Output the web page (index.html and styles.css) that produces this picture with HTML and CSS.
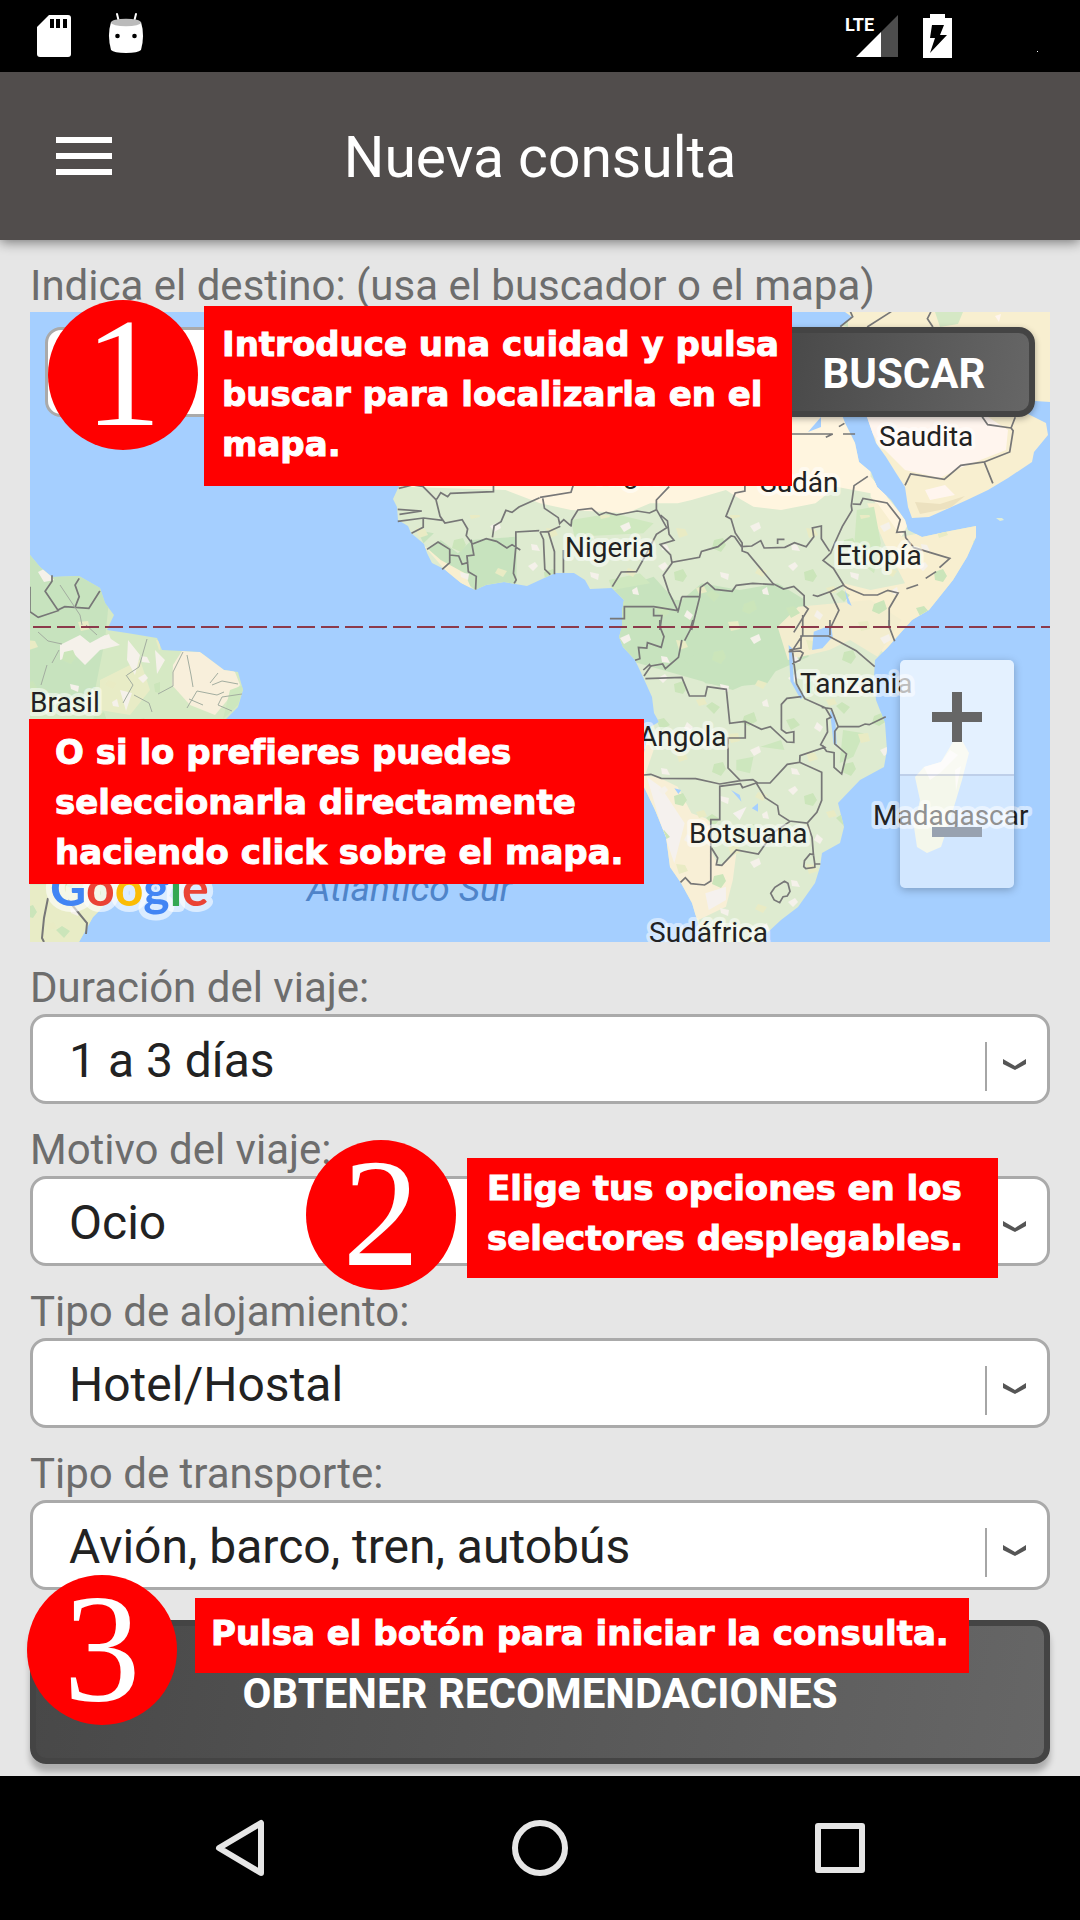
FILE: index.html
```html
<!DOCTYPE html>
<html lang="es">
<head>
<meta charset="utf-8">
<meta name="viewport" content="width=device-width, initial-scale=1">
<title>Nueva consulta</title>
<link rel="stylesheet" href="styles.css">
</head>
<body>
<div class="app">
  <div class="status">
    <svg class="status-left" viewBox="0 0 160 72" aria-hidden="true">
      <path fill="#fff" d="M49 15h19q3 0 3 3v36q0 3-3 3H40q-3 0-3-3V27z"/>
      <path fill="#000" d="M50 19h4v9h-4zM56 19h4v9h-4zM63 19h4v9h-4z"/>
      <path stroke="#fff" stroke-width="2" fill="none" stroke-linecap="round" d="M117 14l2 8M136 14l-2 8"/>
      <path fill="#fff" d="M111 22h30q4 13 0 28q-3 3-15 3t-15-3q-4-15 0-28z"/>
      <ellipse cx="126" cy="22.500" rx="15" ry="3.800" fill="#bbb"/>
      <circle cx="117.500" cy="36" r="2.300"/><circle cx="134.500" cy="36" r="2.300"/>
    </svg>
    <svg class="status-right" viewBox="840 0 240 72" aria-hidden="true">
      <text class="lte" x="845" y="31">LTE</text>
      <path fill="#fff" d="M856 57l25-25v25z"/>
      <path fill="#4d4d4d" d="M881 32l17-17v42h-17z"/>
      <path fill="#fff" d="M930 14h15v4h7v40h-29V18h7z"/>
      <path d="M932 25h12l-4 10h7l-17 18 5-15h-5z"/>
      <path fill="#fff" d="M1037 51h1v1h-1z"/>
    </svg>
  </div>

  <header class="bar">
    <button class="menu" type="button" aria-label="Menú"><span></span><span></span><span></span></button>
    <h1>Nueva consulta</h1>
  </header>

  <form class="form">
    <div class="field">
      <label for="destino">Indica el destino: (usa el buscador o el mapa)</label>
      <div class="map">
        <svg class="map-art" viewBox="30 312 1020 630" preserveAspectRatio="xMidYMid slice" aria-hidden="true">
          <defs>
            <clipPath id="africa"><path d="M399 486L393 499 397 507 398 520 408 526 411 533 424 544 427 553 432 563 444 569 461 583 475 590 486 585 504 582 527 586 540 580 555 573 574 573 585 580 590 589 612 588 624 600 622 612 622 627 619 637 623 647 635 660 643 677 652 697 654 713 659 722 650 727 644 753 644 787 655 810 666 837 670 867 681 883 692 903 697 920 705 942 760 942 767 933 781 920 798 907 815 883 820 867 822 853 840 843 844 827 838 803 860 780 884 767 887 750 885 723 876 700 874 677 875 660 888 647 912 620 929 610 953 580 967 557 976 537 976 526 950 531 922 537 908 530 905 520 891 500 877 487 871 472 859 462 855 443 845 423 840 410 399 410z"/></clipPath>
            <clipPath id="arabia"><path d="M845 312L852 317 840 328 840 400 867 417 876 443 886 457 896 473 905 487 908 507 912 518 929 517 967 500 988 490 1008 478 1032 462 1034 452 1048 435 1046 423 1036 418 1020 410 1020 400 1050 402V312z"/></clipPath>
            <clipPath id="america"><path d="M30 555L40 567 52 577 79 576 100 588 105 603 114 615 107 630 127 633 157 638 162 650 182 651 200 652 224 670 238 672 243 690 238 707 226 719 200 800 100 910 93 917 79 942H30z"/></clipPath>
            <pattern id="specks" width="130" height="112" patternUnits="userSpaceOnUse">
              <path fill="#f5f1ea" d="M8 6l7-4 3 4-5 5zM70 12l9 2-1 6-7-3zM34 56l3-6 6 5-3 5zM100 78l9-4 2 6-7 4zM11 96l6 1 3 6-8-1zM112 30l5-3 2 8-6-1z"/>
              <path fill="#cbe5ba" d="M24 12l9-3 4 7-4 6-8-2zM94 44l10-4 3 9-8 5-7-3zM6 48l8-2 6 7-9 5zM64 92l9-2 3 7-5 7-9-4zM56 34l6-4 8 5-6 7z"/>
              <path fill="#e9ebc4" d="M46 28l8-2 3 6-8 2zM108 8l9 3-4 6-8-4zM26 80l9 1 3 6-9 3zM78 62l10-1 2 8-9 2z"/>
            </pattern>
            <linearGradient id="letters" gradientUnits="userSpaceOnUse" x1="50" y1="0" x2="250" y2="0">
              <stop offset=".18" stop-color="#4285f4"/><stop offset=".18" stop-color="#ea4335"/>
              <stop offset=".325" stop-color="#ea4335"/><stop offset=".325" stop-color="#fbbc05"/>
              <stop offset=".47" stop-color="#fbbc05"/><stop offset=".47" stop-color="#4285f4"/>
              <stop offset=".605" stop-color="#4285f4"/><stop offset=".605" stop-color="#34a853"/>
              <stop offset=".665" stop-color="#34a853"/><stop offset=".665" stop-color="#ea4335"/>
            </linearGradient>
          </defs>
          <rect x="30" y="312" width="1020" height="630" fill="#a5cfff"/>

          <g clip-path="url(#africa)">
            <rect x="390" y="400" width="600" height="545" fill="#deebd0"/>
            <g transform="translate(540 290) scale(.34436 .33333)">
              <path fill="#fff5df" d="M-500 300H960V560L1010 620 960 610 860 590 800 640 700 660 620 650 570 620 540 600 440 630 400 640 320 640 250 670 90 660 0 640-100 600-400 590z"/>
              <path fill="#fff5df" d="M960 560L1070 700 1050 740 960 620z"/>
              <path fill="#f8efd0" d="M1050 740L1300 690 1250 830 1020 1120 930 1000 890 930 880 880 960 900 1060 880 1000 760 950 640 980 640z"/>
              <path fill="#c7e3be" d="M215 900L330 860 400 940 470 880 580 900 690 880 770 930 780 1100 560 1200 220 1100z"/>
              <path fill="#cfe8bf" d="M90 690L210 670 330 700 300 730 100 740zM920 660L970 650 990 760 970 850 910 800zM200 870l90-20 30 30-110 20z"/>
            </g>
            <g transform="translate(0 290) scale(.34436 .33333)">
              <path fill="#c7e3be" d="M1370 750L1500 740 1500 880 1380 900 1240 780 1280 750 1330 790zM1210 720l50 10-30 30z"/>
              <path fill="#f8efd0" d="M1190 730l60 60 60 70 60 40-20-50-70-40z"/>
            </g>
            <g transform="translate(540 620) scale(.34436 .33333)">
              <path fill="#c7e3be" d="M220-60H740L735 80 700 130 660 190 560 200 480 190 420 120 460 100 400 70 340 130 240 80z"/>
              <path fill="#f8efd6" d="M300 330L330 390 305 465 350 475 400 500 440 580 495 600 500 700 520 740 570 700 560 780 540 860 460 900 370 760 300 500z"/>
              <path fill="#f5f1ee" d="M310 470l40 30 70 110-30 120-40-120zM480 820l60-20 0 40-50 30zM560 580l40-20-20 40z"/>
              <path fill="#f3edcf" d="M690 20L750-40 960-60 1050 0 980 110 900 60 840 90 720 120z"/>
              <path fill="#cde7be" d="M570 420l50-10-10 50-40-10zM880 330l60 10-30 70-40 20zM640 380l60-20 10 30z"/>
            </g>
            <rect x="390" y="515" width="600" height="430" fill="url(#specks)"/>
            <g fill="#a5cfff" transform="translate(540 620) scale(.34436 .33333)">
              <path d="M795 35L845 15 850 50 820 85 790 90zM722 75l10 10 5 100 28 45-8 8-30-55zM842 270l15 20 5 90-10-10zM555 510l25 15 5 20zM390 505l20 5-8 12zM615 565l18-15v25z"/>
              <path d="M885-92l20 50-12-8z"/>
            </g>
            <path fill="#a5cfff" d="M808 432l13-15v10z"/>
          </g>

          <g clip-path="url(#arabia)">
            <rect x="830" y="312" width="220" height="210" fill="#f8efd0"/>
            <path fill="#fff5ee" d="M860 415H985L1008 430 1006 450 960 468 940 478 905 470 880 445zM925 490l20-5 10 10-25 5z"/>
            <path fill="#ece1bf" d="M915 502l25 2 25-8-15 12-30 6z"/>
            <path fill="#d5e8c5" d="M935 312h28l-5 12-18 3zM840 325l8-8v10z"/>
            <path fill="#fff5ee" d="M995 316l6-2-2 8z"/>
          </g>

          <g clip-path="url(#america)">
            <rect x="30" y="550" width="220" height="400" fill="#d6e9c4"/>
            <path fill="#c7e3be" d="M30 550L110 590 105 640 95 690 60 715 30 700z"/>
            <path fill="#f8efdb" d="M173 665L182 651 200 652 235 672 240 685 215 715 190 705 172 685z"/>
            <path fill="#e8ecc6" d="M100 680l40-20 10 30-20 25-30-5zM30 885h70v40l-20 20H30z"/>
            <path fill="#cde7be" d="M230 690l14-5-6 20-15 14z"/>
            <path fill="#f5f1ea" d="M38 572l8-4 8 12-10 2zM60 645l20-10 10 8 15-8 15 10-20 5-15 15-10-10-15 5zM128 640l12 15-5 20-8-15zM155 650l10 10-8 14zM120 690l12 3-6 18z"/>
            <rect x="30" y="620" width="130" height="330" fill="url(#specks)"/>
          </g>

          <path fill="#e9efd6" d="M958 733L969 753 962 780 950 820 941 847 927 853 917 847 914 827 920 800 915 777 924 767 941 762 950 747z"/>
          <path fill="#f8f5f0" d="M924 767l17-5 9-12 8 5-18 18-10 7zM955 770l6-4-5 25z"/>
          <path fill="#e0edd8" d="M996 518l6 0 2 2-4 1z"/>

          <g class="border">
            <g transform="translate(0 290) scale(.34436 .33333)">
              <path d="M1158 595l40-10 30 4 38 40 12 50 14 20 50-10 16 28-4 20 18 25 40-16 30 8 30 20 15-10 24 16M1268 628l12-20 20 12 8-10 125-5v-30M1430 742l5-35 20-12 14-34 18 6 20-16 60-28M1155 658l70 5-65 10M1155 694l75-10 56 7M1195 730l34-18v-26M1240 778l32-22 34 22v40l-22 20M1306 795l26 3 10 25 16-5-2-20 20-3-8-46M1358 820l2 25 23 14-2 40M1498 770v-44l68-4M1498 770l-7 80 8 20-6 10"/>
              <path d="M87 890v75l24 17 58-20-38-58 20-30v-18M230 865l-12 20 12 35-12 32M168 960l20-10 70 5 32-52"/>
            </g>
            <g transform="translate(540 290) scale(.34436 .33333)">
              <path d="M0 622l90-15 6-20M8 625l5 30 40 28 4 18 12-12 20 18M0 726l24-1 35-16M375 590l-37 40v28l30 55-30 20-30 60-28 52-44 1-26 44M90 710l2-20 18-30 40-5 22 20 20-8 30 8 60-12 36 6 20-10M350 675l20 18 5 40 14 18-40 12 30 32 4 22 80-15 6-18 48-14 38-32 10 2 20 30 30-2 26-16 10 22 60-2 28-14 34 12 22-30-4-26 26-6v38l24 38M595 587v16l-28 6-27 70 15 8 12 42 20 30v24l16 6 74 92 30 16 30-8 30 28v30l12 10-24 40-18 30M384 818l-26 38 16 50 26 56-70-12h-85v36h-42M330 955v22h24l-6 43M412 920l-12 48M412 920h52l2-28 20-14 22 20 50 6 12-18 48-6 62 4M464 920l-24 100M792 915l14 4 36-14 40-20-30-50-30-24 22-22 12-30 22-50 28-48-2-14 8-60 40-28M908 642l22 1 8-18 70 14 38 50-10 38 24-2 2 18 24 30 104 32-30 28M1120 865l30-20M1064 896l34-12M880 885l14 10 46 20h40l30-14 30 8-26 46v60M842 905l26 56-26 56M0 726l10 22 4 90 16 16M24 725l18 60v68M68 780v68M700 432h150l-20 10M880 432h35M868 410l16-10M690 762v-14h20M950 111l70-46M900 62l8 18-36 30M1135 66l-10 20 16 25"/>
              <path d="M1060 586l16-34 98 16 48-42 68-10 25 64M1290 516l74-30 10-64-6-8 12-32M1368 414l-68-10-16-24"/>
            </g>
            <g transform="translate(540 620) scale(.34436 .33333)">
              <path d="M348 0v20l12 30-8 32-40-14-2 16-24-2 4 34-14 5M444 0l-8 30-16 32M412 60l-10 52-38 34-8-14-34 6-20 30M300 150l18-16 4 8M306 176l106-4 22 56h46l6-28 55 8 10 102 44-6 48 24 26-8 48 46 20 1v-32l-22 4-14-10v-76l16-18 42-5M596 304v50h-50v90l36 38-60 10-70-16-100-1-30-12-20 2M582 482l36-3 14 10h36l50-56 36-6 1-20 72-25-12-8 20-38-2-38 12-6-16-28-60-28-24-45-12-100 30-46v-60M724 90l34-6v-36h80l80 44 54 48M722 95l34-2 8 6-10 22-22 10M842 0v46M1014 0v20l16 44M818 262l28 4 20 54h60l18-8 12 2 48-24M866 320l-10 14v38l34 30-14 60-22-20v-44l-22-4-12-18M754 427l64 30v84l-14 36-28 32-52-6-30-20-4-26-36-24-26-44-40 14-6-12-60 8v100h-26v184l-18 12-40-4-16-18-14 14M498 684l18 30-4 20 16 2 42-46 64 12 44-64 48-34M776 608l14 44 4 52-10-2-16 20-2 18 6 6 26-4v-10h16M794 704l4 28M670 820l12-18 28-18 10 6 6 24-8 14-12 2-10 18-16-8z"/>
            </g>
            <path class="faint" d="M60 585l20 30 2 10M86 625l11 10M38 632l10 9 14 3M59 650l-7 13M47 665l-6 20M147 639l-8 28-12 8M183 652l-10 20v14l-15 8M187 655l4 20 2 12M210 683l8-10M212 685l10-4 16 3M187 708l10-17 20 4 7-3M203 705l-14-6M242 694l-20 3-4 8 14 6M126 675l7 10-10 18M134 695l15 8 3 9"/>
            <path d="M48 898l-4 20-2 20 2 4M68 900l19 23-1 11"/>
          </g>

          <path class="equator" d="M33 627H1050"/>

          <g class="place">
            <text x="879" y="446">Saudita</text>
            <text x="760" y="492">Sudán</text>
            <text x="596" y="483">Níger</text>
            <text x="565" y="557">Nigeria</text>
            <text x="836" y="565">Etiopía</text>
            <text x="30" y="712">Brasil</text>
            <text x="800" y="693">Tanzania</text>
            <text x="639" y="746">Angola</text>
            <text x="689" y="843">Botsuana</text>
            <text x="873" y="825">Madagascar</text>
            <text x="649" y="942">Sudáfrica</text>
          </g>
          <text class="ocean" x="307" y="901">Atlántico Sur</text>
          <text class="google" x="50" y="906">Google</text>
        </svg>

        <div class="search">
          <input id="destino" type="text">
          <button class="dark" type="button">BUSCAR</button>
        </div>
        <div class="zoom">
          <button type="button" aria-label="Acercar"><svg viewBox="0 0 50 50"><path d="M20 0h10v20h20v10H30v20H20V30H0V20h20z"/></svg></button>
          <button type="button" aria-label="Alejar" disabled><svg viewBox="0 0 50 50"><path d="M0 20h50v10H0z"/></svg></button>
        </div>
      </div>
      <span class="step step-1">1</span>
      <p class="tip tip-search">Introduce una cuidad y pulsa<br>buscar para localizarla en el<br>mapa.</p>
      <p class="tip tip-map">O si lo prefieres puedes<br>seleccionarla directamente<br>haciendo click sobre el mapa.</p>
    </div>

    <div class="field">
      <label for="duracion">Duración del viaje:</label>
      <div class="pick">
        <select id="duracion"><option>1 a 3 días</option></select>
        <svg viewBox="0 0 65 90" aria-hidden="true"><path fill="#a6a6a6" d="M0 28h2v49H0z"/><path fill="#555" d="M18 45l12 7 11-7v5l-11 6-12-6z"/></svg>
      </div>
    </div>

    <div class="field">
      <label for="motivo">Motivo del viaje:</label>
      <div class="pick">
        <select id="motivo"><option>Ocio</option></select>
        <svg viewBox="0 0 65 90" aria-hidden="true"><path fill="#a6a6a6" d="M0 28h2v49H0z"/><path fill="#555" d="M18 45l12 7 11-7v5l-11 6-12-6z"/></svg>
      </div>
      <span class="step step-2">2</span>
      <p class="tip tip-select">Elige tus opciones en los<br>selectores desplegables.</p>
    </div>

    <div class="field">
      <label for="alojamiento">Tipo de alojamiento:</label>
      <div class="pick">
        <select id="alojamiento"><option>Hotel/Hostal</option></select>
        <svg viewBox="0 0 65 90" aria-hidden="true"><path fill="#a6a6a6" d="M0 28h2v49H0z"/><path fill="#555" d="M18 45l12 7 11-7v5l-11 6-12-6z"/></svg>
      </div>
    </div>

    <div class="field">
      <label for="transporte">Tipo de transporte:</label>
      <div class="pick">
        <select id="transporte"><option>Avión, barco, tren, autobús</option></select>
        <svg viewBox="0 0 65 90" aria-hidden="true"><path fill="#a6a6a6" d="M0 28h2v49H0z"/><path fill="#555" d="M18 45l12 7 11-7v5l-11 6-12-6z"/></svg>
      </div>
    </div>

    <div class="submit">
      <button class="dark" type="button">OBTENER RECOMENDACIONES</button>
      <span class="step step-3">3</span>
      <p class="tip tip-submit">Pulsa el botón para iniciar la consulta.</p>
    </div>
  </form>

  <nav class="nav">
    <button type="button" aria-label="Atrás"><svg viewBox="0 0 60 60"><path d="M51 5v50L9 30z"/></svg></button>
    <button type="button" aria-label="Inicio"><svg viewBox="0 0 60 60"><circle cx="30" cy="30" r="25"/></svg></button>
    <button type="button" aria-label="Recientes"><svg viewBox="0 0 60 60"><path d="M8 8h44v44H8z"/></svg></button>
  </nav>
</div>
</body>
</html>
```
FILE: styles.css
```css
* { box-sizing: border-box; }

body {
  margin: 0;
  background: #e6e6e6;
  font-family: Roboto, "Liberation Sans", sans-serif;
}

button, input, select { font: inherit; margin: 0; }
h1, p { margin: 0; }

.app {
  display: flex;
  flex-direction: column;
  min-height: 100vh;
}

/* System status bar */
.status {
  display: flex;
  justify-content: space-between;
  height: 72px;
  background: #000;
}
.status-left { width: 160px; height: 72px; }
.status-right { width: 240px; height: 72px; }
.lte {
  font: bold 18px Roboto, sans-serif;
  fill: #fff;
}

/* Title bar */
.bar {
  display: grid;
  grid-template-columns: 168px 1fr 168px;
  align-items: center;
  height: 168px;
  background: #514d4c;
  box-shadow: 0 2px 12px rgba(0, 0, 0, .5);
}
.bar h1 {
  padding-top: 4px;
  font-size: 57px;
  font-weight: 400;
  line-height: 68px;
  text-align: center;
  color: #fff;
}
.menu {
  display: grid;
  gap: 10px;
  justify-self: center;
  width: 56px;
  padding: 0;
  border: 0;
  background: none;
}
.menu span { height: 6px; background: #fff; }

/* Query form */
.form {
  flex: 1;
  padding: 0 30px 12px;
}
.field { position: relative; }
.field label {
  display: flex;
  align-items: flex-end;
  height: 72px;
  padding-bottom: 1px;
  font-size: 42px;
  line-height: 50px;
  color: #6d6d6d;
  white-space: nowrap;
}

.map {
  position: relative;
  height: 630px;
  overflow: hidden;
}
.map-art { display: block; width: 100%; height: 100%; }
.border { fill: none; stroke: #777; stroke-width: 2; }
.border g { stroke-width: 5; }
.faint { stroke: #a3ada0; stroke-width: 1; }
.equator { stroke: #8c3a4b; stroke-width: 2; stroke-dasharray: 18 6; }
.place {
  font-size: 28px;
  fill: #222;
  stroke: rgba(255, 255, 255, .5);
  stroke-width: 8;
  stroke-linejoin: round;
  paint-order: stroke;
}
.ocean { font-size: 37px; font-style: italic; fill: #4f84c9; }
.google {
  font: 700 50px Lato, sans-serif;
  fill: url(#letters);
  stroke: rgba(255, 255, 255, .6);
  stroke-width: 12;
  stroke-linejoin: round;
  paint-order: stroke;
}

.search {
  position: absolute;
  top: 15px;
  left: 15px;
  right: 15px;
  display: grid;
  grid-template-columns: 1fr 262px;
  gap: 15px;
}
.search input {
  min-width: 0;
  height: 90px;
  padding: 0 36px;
  border: 3px solid #aaa;
  border-radius: 16px;
  background: #fff;
  font-size: 48px;
}
.dark {
  padding-top: 3px;
  border: 6px solid #444;
  border-radius: 16px;
  background: linear-gradient(100deg, #484848, #666);
  box-shadow: 0 8px 6px rgba(0, 0, 0, .25);
  font-size: 42px;
  font-weight: 700;
  color: #fff;
}
.search .dark { box-shadow: 0 2px 6px rgba(0, 0, 0, .3); }

.zoom {
  position: absolute;
  right: 36px;
  bottom: 54px;
  width: 114px;
  border-radius: 5px;
  box-shadow: 0 2px 8px rgba(0, 0, 0, .25);
}
.zoom button {
  display: grid;
  place-items: center;
  width: 100%;
  height: 114px;
  padding: 0;
  border: 0;
  border-radius: 5px 5px 0 0;
  background: rgba(255, 255, 255, .7);
}
.zoom button + button {
  border-top: 2px solid rgba(160, 170, 200, .4);
  border-radius: 0 0 5px 5px;
  background: rgba(255, 255, 255, .5);
}
.zoom svg { width: 50px; fill: #666; }
.zoom button + button svg { fill: #98a2b0; }

.pick { position: relative; }
.pick select {
  display: block;
  width: 100%;
  height: 90px;
  padding: 2px 96px 0 36px;
  border: 3px solid #aaa;
  border-radius: 16px;
  background: #fff;
  font-size: 48px;
  color: #222;
  appearance: none;
}
.pick svg {
  position: absolute;
  top: 0;
  right: 0;
  width: 65px;
  height: 90px;
  pointer-events: none;
}

.submit { position: relative; margin-top: 30px; }
.submit .dark { display: block; width: 100%; height: 144px; }

/* Help overlay */
.step {
  position: absolute;
  z-index: 2;
  width: 150px;
  height: 150px;
  border-radius: 50%;
  background: #f00;
  font: 154px/146px "Liberation Serif", serif;
  text-align: center;
  color: #fff;
}
.step-1 { top: 60px; left: 18px; }
.step-2 { top: 36px; left: 276px; }
.step-3 { top: -45px; left: -3px; }

.tip {
  position: absolute;
  z-index: 2;
  background: #f00;
  font: 700 34px/50px "DejaVu Sans", sans-serif;
  -webkit-text-stroke: 1px #fff;
  white-space: nowrap;
  color: #fff;
}
.tip-search { top: 66px; left: 174px; width: 588px; padding: 13px 18px 17px; }
.tip-map { top: 479px; left: -1px; width: 615px; padding: 8px 26px 7px; }
.tip-select { top: 54px; left: 437px; width: 531px; padding: 5px 20px 15px; }
.tip-submit { top: -22px; left: 165px; width: 774px; padding: 10px 16px 15px; }

/* System navigation */
.nav {
  display: grid;
  grid-template-columns: repeat(3, 1fr);
  height: 144px;
  padding: 0 90px;
  background: #000;
}
.nav button {
  display: grid;
  place-items: center;
  padding: 0;
  border: 0;
  background: none;
}
.nav svg {
  width: 60px;
  fill: none;
  stroke: #e6e6e6;
  stroke-width: 6;
  stroke-linejoin: round;
}
```
